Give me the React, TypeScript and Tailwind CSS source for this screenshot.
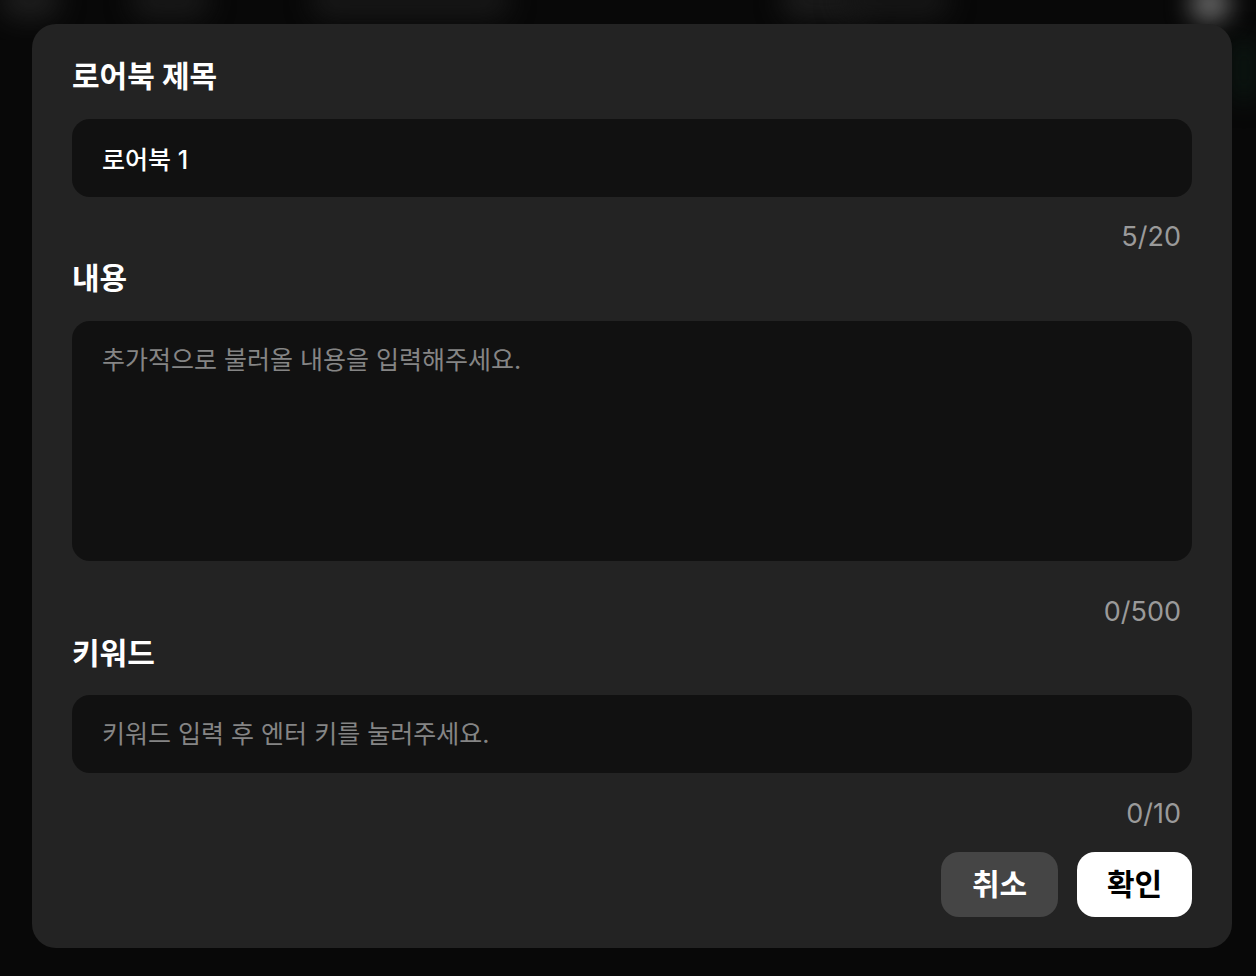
import { useState } from "react";

// ─── LorebookModal ────────────────────────────────────────────────────
// Edit dialog for a lorebook entry: title, content, keywords + actions.

const FONT = { fontFamily: 'Inter, "Noto Sans CJK KR", sans-serif' };

function Counter({ value, max }: { value: number; max: number }) {
  return (
    <p className="text-right pr-[11px] text-[27px] leading-[32px] text-[#9a9a9a]">
      {value}/{max}
    </p>
  );
}

function Label({ children }: { children: string }) {
  return <h2 className="text-[30px] leading-[40px] font-bold text-white">{children}</h2>;
}

export default function App() {
  const [title, setTitle] = useState("로어북 1");
  const [content, setContent] = useState("");
  const [keyword, setKeyword] = useState("");
  const [keywords] = useState<string[]>([]);

  return (
    <div className="relative min-h-[976px] w-full overflow-hidden bg-[#080808]" style={FONT}>
      {/* blurred page behind the overlay */}
      <div className="absolute inset-x-0 top-0 h-[40px] overflow-hidden">
        <div className="absolute left-[0px] top-[-20px] h-[40px] w-[60px] rounded-full bg-[#1c1c1c] blur-md" />
        <div className="absolute left-[130px] top-[-20px] h-[40px] w-[80px] rounded-full bg-[#171717] blur-md" />
        <div className="absolute left-[310px] top-[-20px] h-[40px] w-[200px] rounded-full bg-[#161616] blur-md" />
        <div className="absolute left-[780px] top-[-20px] h-[40px] w-[90px] rounded-full bg-[#1a1a1a] blur-md" />
        <div className="absolute left-[840px] top-[-20px] h-[40px] w-[110px] rounded-full bg-[#151515] blur-md" />
        <div className="absolute left-[1190px] top-[-14px] h-[36px] w-[40px] rounded-full bg-[#6a6a6a] blur-md" />
      </div>
      <div className="absolute right-0 top-[40px] h-[60px] w-[24px] bg-[#0b1712] blur-md" />

      <div className="relative ml-[32px] mt-[24px] flex w-[1200px] flex-col rounded-[24px] bg-[#232323] px-[40px] pt-[32px] pb-[31px]">
        <Label>로어북 제목</Label>
        <input
          value={title}
          onChange={(e) => setTitle(e.target.value.slice(0, 20))}
          className="mt-[23px] h-[78px] w-full shrink-0 rounded-[18px] bg-[#111111] px-[30px] text-[25px] font-medium text-white outline-none"
        />
        <div className="mt-[24px]">
          <Counter value={title.length} max={20} />
        </div>

        <div className="mt-[5px]">
          <Label>내용</Label>
        </div>
        <textarea
          value={content}
          onChange={(e) => setContent(e.target.value.slice(0, 500))}
          placeholder="추가적으로 불러올 내용을 입력해주세요."
          className="mt-[23px] h-[240px] w-full shrink-0 resize-none rounded-[18px] bg-[#111111] px-[30px] pt-[21px] text-[25px] leading-[36px] text-white placeholder:text-[#858585] outline-none"
        />
        <div className="mt-[35px]">
          <Counter value={content.length} max={500} />
        </div>

        <div className="mt-[5px]">
          <Label>키워드</Label>
        </div>
        <input
          value={keyword}
          onChange={(e) => setKeyword(e.target.value)}
          placeholder="키워드 입력 후 엔터 키를 눌러주세요."
          className="mt-[22px] h-[78px] w-full shrink-0 rounded-[18px] bg-[#111111] px-[30px] text-[25px] text-white placeholder:text-[#858585] outline-none"
        />
        <div className="mt-[25px]">
          <Counter value={keywords.length} max={10} />
        </div>

        <div className="mt-[22px] flex justify-end gap-[19px]">
          <button className="h-[65px] w-[117px] rounded-[18px] bg-[#454545] text-[30px] font-bold text-white">
            취소
          </button>
          <button className="h-[65px] w-[115px] rounded-[18px] bg-white text-[30px] font-bold text-black">
            확인
          </button>
        </div>
      </div>
    </div>
  );
}
